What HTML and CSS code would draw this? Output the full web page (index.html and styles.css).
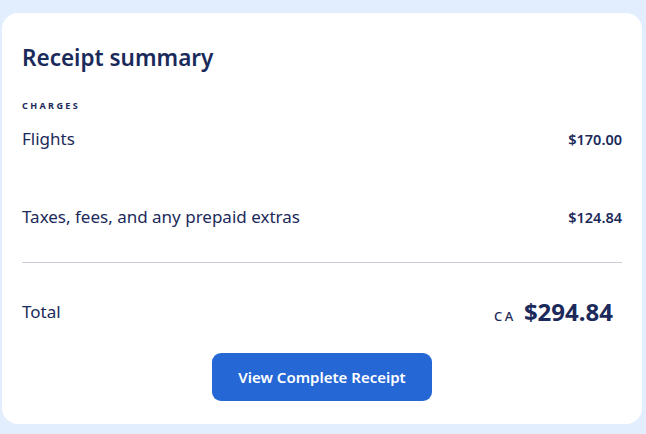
FILE: index.html
```html
<!DOCTYPE html>
<html lang="en">
<head>
<meta charset="utf-8">
<title>Receipt summary</title>
<link rel="stylesheet" href="styles.css">
</head>
<body>
  <section class="card">
    <h2 class="title">Receipt summary</h2>
    <div class="label">Charges</div>
    <div class="rows">
      <div class="row">
        <span class="row-name">Flights</span>
        <span class="row-amount">$170.00</span>
      </div>
      <div class="row">
        <span class="row-name">Taxes, fees, and any prepaid extras</span>
        <span class="row-amount">$124.84</span>
      </div>
    </div>
    <hr class="divider">
    <div class="total">
      <span class="total-name">Total</span>
      <span class="total-amount"><span class="currency">CA</span><span class="total-value">$294.84</span></span>
    </div>
    <div class="actions">
      <button class="btn" type="button">View Complete Receipt</button>
    </div>
  </section>
</body>
</html>
```
FILE: styles.css
```css
html, body {
  margin: 0;
  padding: 0;
}
body {
  background: #e2eefd;
  font-family: "Noto Sans", "Open Sans", sans-serif;
  color: #1b2a5a;
  padding: 13px 4px 10px 2px;
}
.card {
  background: #ffffff;
  border-radius: 16px;
  padding: 30px 20px 23px 20px;
  height: 358px;
}
.title {
  margin: 0;
  font-size: 22.5px;
  line-height: 30px;
  font-weight: 600;
  color: #1a2a5b;
}
.label {
  margin-top: 27px;
  font-size: 9px;
  line-height: 12px;
  font-weight: 700;
  letter-spacing: 2.4px;
  text-transform: uppercase;
}
.rows {
  margin-top: 15px;
  display: flex;
  flex-direction: column;
  gap: 54px;
}
.row, .total {
  display: flex;
  justify-content: space-between;
  align-items: center;
}
.row-name, .total-name {
  font-size: 17px;
  line-height: 24px;
}
.row-amount {
  font-size: 14.5px;
  font-weight: 600;
  line-height: 24px;
}
.divider {
  margin: 33px 0 0 0;
  border: 0;
  border-top: 1px solid #c9ced6;
  height: 0;
}
.total {
  margin-top: 34px;
  padding-right: 9px;
}
.total-amount {
  display: flex;
  align-items: baseline;
  gap: 8px;
}
.currency {
  font-size: 13px;
  font-weight: 500;
  letter-spacing: 2.5px;
}
.total-value {
  font-size: 24px;
  font-weight: 700;
  line-height: 30px;
}
.actions {
  display: flex;
  justify-content: center;
  margin-top: 26px;
}
.btn {
  width: 220px;
  height: 48px;
  border: 0;
  border-radius: 9px;
  background: #2567d5;
  color: #ffffff;
  font-family: inherit;
  font-size: 15px;
  font-weight: 600;
}
```
